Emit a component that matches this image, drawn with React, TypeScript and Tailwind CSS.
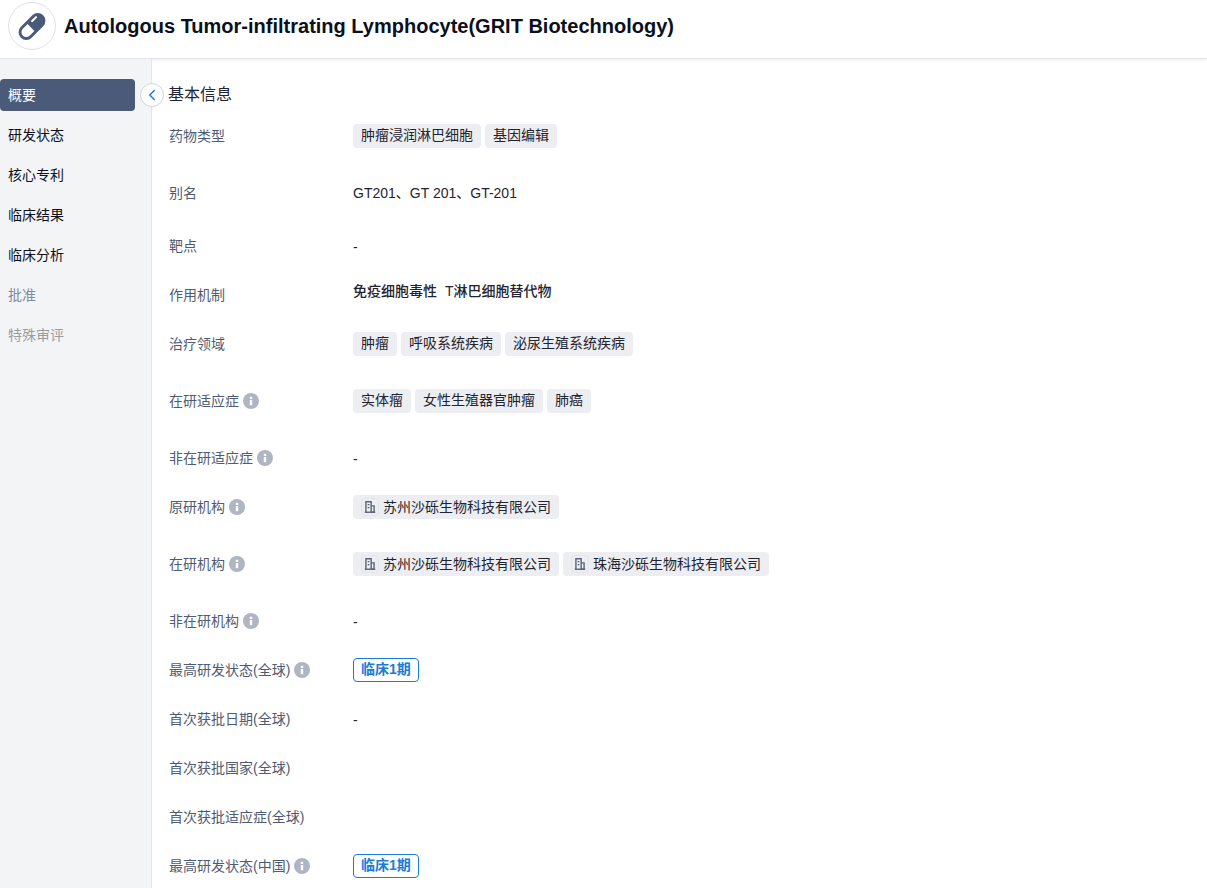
import React from 'react';
import { ChevronLeft } from 'lucide-react';

const font = "font-['Liberation_Sans','Noto_Sans_CJK_SC',sans-serif]";

const navItems = ['概要', '研发状态', '核心专利', '临床结果', '临床分析', '批准', '特殊审评'];

const PillLogo = () => (
  <svg viewBox="0 0 48 48" className="w-12 h-12">
    <g transform="rotate(-45 24 24.5)">
      <rect x="7.5" y="16.5" width="33" height="16" rx="8" fill="#4a5a78" />
      <path d="M22.5 19.5h-7a5 5 0 0 0 0 10h7z" fill="#fff" />
      <rect x="27" y="19.5" width="8" height="2.2" rx="1.1" fill="#fff" />
    </g>
  </svg>
);

const InfoIcon = () => (
  <svg viewBox="0 0 16 16" className="w-4 h-4 ml-1 shrink-0">
    <circle cx="8" cy="8" r="8" fill="#b0b5c4" />
    <rect x="6.8" y="7" width="2.4" height="5.2" fill="#fff" />
    <rect x="6.8" y="3.8" width="2.4" height="2.2" fill="#fff" />
  </svg>
);

const OrgIcon = () => (
  <span className="w-[18px] h-[18px] rounded-[4px] border border-[#e2e4e9] flex items-center justify-center mr-1">
    <svg viewBox="0 0 12 12" className="w-[14px] h-[14px]" fill="none" stroke="#5b6478" strokeWidth="1.2">
      <path d="M2.5 10.5V1.5h4.5v9" />
      <path d="M7 5h2.5v5.5H7" />
      <path d="M1.5 10.5h9" />
      <path d="M4 4h1.5M4 6.5h1.5" />
    </svg>
  </span>
);

const Tag = ({ children }: { children: React.ReactNode }) => (
  <span className="h-6 px-2 rounded-[4px] bg-[#eceef1] text-[14px] leading-[23px] text-[#1f2430]">{children}</span>
);

const OrgTag = ({ name }: { name: string }) => (
  <span className="h-6 pl-2 pr-2 rounded-[4px] bg-[#eceef1] flex items-center text-[14px] text-[#1f2430]">
    <OrgIcon />
    {name}
  </span>
);

const Phase = () => (
  <span className="h-6 px-[7px] rounded-[4px] border border-[#1a7bdc] text-[14px] leading-[21px] font-bold text-[#1a7bdc]">
    临床1期
  </span>
);

const Dash = () => <span className="translate-y-px">-</span>;

const Row = ({
  label,
  info,
  height,
  children,
}: {
  label: string;
  info?: boolean;
  height: string;
  children?: React.ReactNode;
}) => (
  <div className={`flex items-start ${height}`}>
    <div className="w-[184px] h-6 flex items-center text-[14px] text-[#4f5b73]">
      {label}
      {info && <InfoIcon />}
    </div>
    <div className="flex items-center gap-1 min-h-6 text-[14px] text-[#1f2430]">{children}</div>
  </div>
);

const App = () => {
  return (
    <div className={`${font} h-[888px] overflow-hidden bg-white`}>
      <header className="h-[59px] flex items-center pl-2 border-b border-[#e3e5ea] shadow-[0_1px_3px_rgba(0,0,0,0.08)] relative pb-[6px]">
        <div className="w-12 h-12 rounded-full border border-[#dfe1e8] flex items-center justify-center shrink-0">
          <PillLogo />
        </div>
        <h1 className="ml-2 text-[20px] font-bold text-[#0b1020] whitespace-nowrap">
          Autologous Tumor-infiltrating Lymphocyte(GRIT Biotechnology)
        </h1>
      </header>
      <div className="flex h-[829px]">
        <aside className="w-[152px] shrink-0 bg-[#f3f4f6] border-r border-[#e3e5ea] pt-5 pr-4 relative">
          <nav className="flex flex-col gap-2">
            {navItems.map((item, i) => (
              <div
                key={item}
                className={`h-8 pl-2 flex items-center text-[14px] rounded-[4px] ${
                  i === 0
                    ? 'bg-[#4a5a78] text-white'
                    : i === 5
                      ? 'text-[#7f8ba3]'
                      : i === 6
                        ? 'text-[#9a9ca3]'
                        : 'text-[#0b1020]'
                }`}
              >
                {item}
              </div>
            ))}
          </nav>
          <button className="absolute left-[140px] top-6 w-6 h-6 rounded-full bg-white border border-[#cfd5e2] flex items-center justify-center">
            <ChevronLeft className="w-[18px] h-[18px] text-[#1a7bdc]" />
          </button>
        </aside>
        <main className="flex-1 pl-[17px] pt-[24px]">
          <h2 className="ml-[-1px] h-6 leading-6 text-[16px] text-[#1f2430] mb-[17px]">基本信息</h2>
          <Row label="药物类型" height="h-[57px]">
            <Tag>肿瘤浸润淋巴细胞</Tag>
            <Tag>基因编辑</Tag>
          </Row>
          <Row label="别名" height="h-[53px]">GT201、GT 201、GT-201</Row>
          <Row label="靶点" height="h-[49px]"><Dash /></Row>
          <Row label="作用机制" height="h-[49px]">
            <span className="font-medium -mt-2 flex gap-2">
              <span>免疫细胞毒性</span>
              <span>T淋巴细胞替代物</span>
            </span>
          </Row>
          <Row label="治疗领域" height="h-[57px]">
            <Tag>肿瘤</Tag>
            <Tag>呼吸系统疾病</Tag>
            <Tag>泌尿生殖系统疾病</Tag>
          </Row>
          <Row label="在研适应症" info height="h-[57px]">
            <Tag>实体瘤</Tag>
            <Tag>女性生殖器官肿瘤</Tag>
            <Tag>肺癌</Tag>
          </Row>
          <Row label="非在研适应症" info height="h-[49px]"><Dash /></Row>
          <Row label="原研机构" info height="h-[57px]">
            <OrgTag name="苏州沙砾生物科技有限公司" />
          </Row>
          <Row label="在研机构" info height="h-[57px]">
            <OrgTag name="苏州沙砾生物科技有限公司" />
            <OrgTag name="珠海沙砾生物科技有限公司" />
          </Row>
          <Row label="非在研机构" info height="h-[49px]"><Dash /></Row>
          <Row label="最高研发状态(全球)" info height="h-[49px]">
            <Phase />
          </Row>
          <Row label="首次获批日期(全球)" height="h-[49px]"><Dash /></Row>
          <Row label="首次获批国家(全球)" height="h-[49px]" />
          <Row label="首次获批适应症(全球)" height="h-[49px]" />
          <Row label="最高研发状态(中国)" info height="h-[49px]">
            <Phase />
          </Row>
        </main>
      </div>
    </div>
  );
};

export default App;
